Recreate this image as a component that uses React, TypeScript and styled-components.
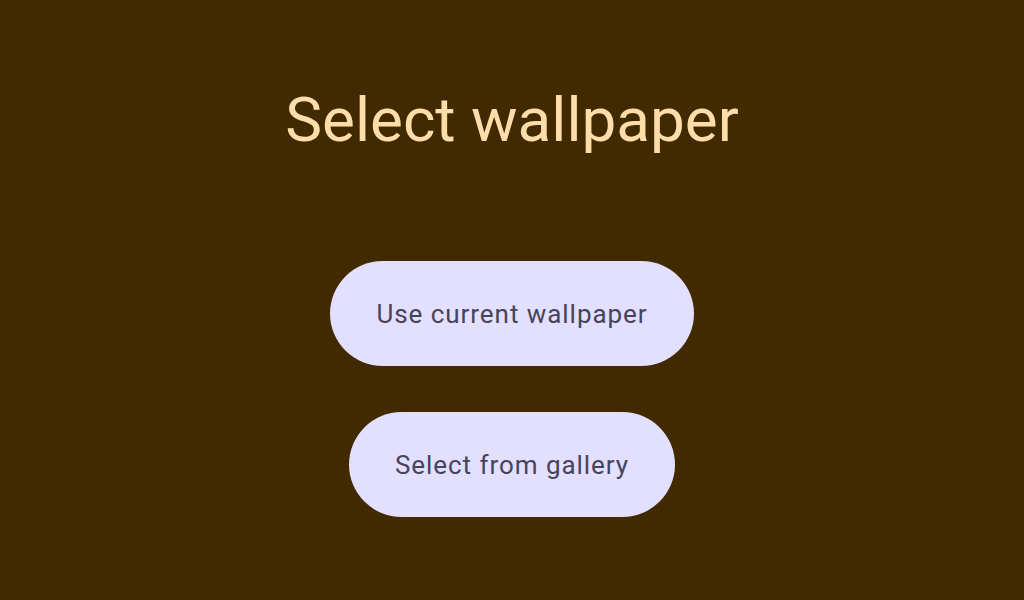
import React from "react";
import styled, { createGlobalStyle } from "styled-components";

const Global = createGlobalStyle`
  html, body { margin: 0; padding: 0; background: #412A00; }
  #root { width: 1024px; height: 600px; }
`;

const Page = styled.div`
  width: 1024px;
  height: 600px;
  background: #412A00;
  display: flex;
  flex-direction: column;
  align-items: center;
  font-family: Roboto, "Noto Sans", sans-serif;
  box-sizing: border-box;
  padding-top: 81px;
`;

const Title = styled.h1`
  margin: 0;
  font-size: 62px;
  font-weight: 400;
  line-height: 78px;
  color: #FFDDAA;
`;

const Actions = styled.div`
  margin-top: 102px;
  display: flex;
  flex-direction: column;
  align-items: center;
  gap: 46px;
`;

const PillButton = styled.button`
  height: 105px;
  padding: 0 46px;
  border: none;
  border-radius: 53px;
  background: #E2DFFF;
  color: #46445C;
  font-family: inherit;
  font-size: 26px;
  font-weight: 400;
  letter-spacing: 0.95px;
  cursor: pointer;
`;

export default function App() {
  return (
    <>
      <Global />
      <Page>
        <Title>Select wallpaper</Title>
        <Actions>
          <PillButton>Use current wallpaper</PillButton>
          <PillButton>Select from gallery</PillButton>
        </Actions>
      </Page>
    </>
  );
}
